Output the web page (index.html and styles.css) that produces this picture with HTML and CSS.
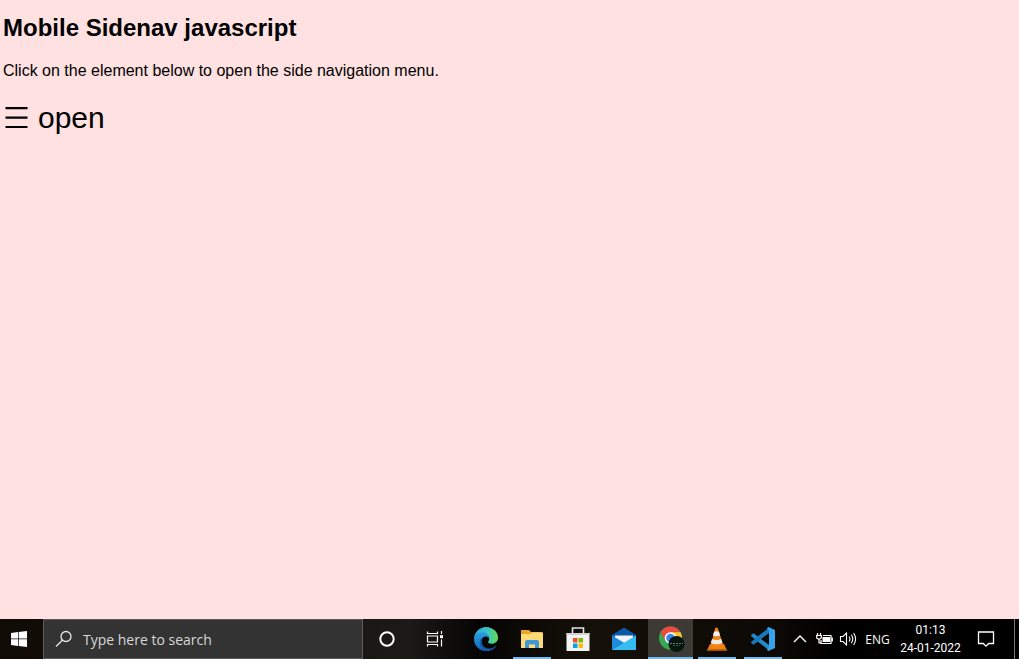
FILE: index.html
```html
<!DOCTYPE html>
<html lang="en">
<head>
<meta charset="utf-8">
<title>Mobile Sidenav javascript</title>
<link rel="stylesheet" href="styles.css">
</head>
<body>
<main class="page">
  <h2 class="title">Mobile Sidenav javascript</h2>
  <p class="hint">Click on the element below to open the side navigation menu.</p>
  <button class="open-nav" type="button">
    <svg width="27" height="24" viewBox="0 0 27 24" aria-hidden="true"><path d="M2.500 2.200h22M2.500 11.700h22M2.500 21h22" stroke="#000" stroke-width="2.200"/></svg>
    <span>open</span>
  </button>
</main>
<footer class="taskbar">
  <button class="start" type="button" aria-label="Start">
    <svg width="16" height="16" viewBox="0 0 16 16" fill="#fff"><path d="M0 2l7-1v6.500H0zM7.700.9L16 0v7.500H7.700zM0 8.200h7V15l-7-1zM7.700 8.200H16V16l-8.300-1z"/></svg>
  </button>
  <label class="search">
    <svg width="18" height="18" viewBox="0 0 18 18" fill="none" stroke="#e6e6e6" stroke-width="1.300"><circle cx="11" cy="6.500" r="5"/><path d="M7.300 10.200L1 16.500"/></svg>
    <input class="search-input" type="text" placeholder="Type here to search" aria-label="Type here to search">
  </label>
  <nav class="tools">
    <button class="tool" type="button" aria-label="Cortana">
      <svg width="18" height="18" viewBox="0 0 18 18" fill="none" stroke="#fff" stroke-width="2"><circle cx="9" cy="9" r="6.700"/></svg>
    </button>
    <button class="tool" type="button" aria-label="Task View">
      <svg width="18" height="18" viewBox="0 0 18 18" fill="none" stroke="#fff" stroke-width="1.200"><path d="M1.500 1.500v2h10v-2M1.500 16.500v-2h10v2M1.500 6h10v6h-10zM15.500 1v3M15.500 9.500v7"/><path d="M14 5.200h3v3h-3z" fill="#fff" stroke="none"/></svg>
    </button>
  </nav>
  <nav class="apps">
    <button class="app" type="button" aria-label="Edge">
      <svg width="24" height="24" viewBox="0 0 24 24">
        <defs>
          <linearGradient id="edge-top"><stop offset="0" stop-color="#2aa6e0"/><stop offset=".55" stop-color="#35c3c8"/><stop offset="1" stop-color="#65dc4b"/></linearGradient>
          <linearGradient id="edge-left" x2="0" y2="1"><stop offset="0" stop-color="#299fe0"/><stop offset="1" stop-color="#1266b8"/></linearGradient>
        </defs>
        <path d="M0 12C.3 5 5.500 0 12 0c7 0 12 5.200 12 10.500 0 4-3 6.300-6.500 6.300-3 0-3.700-1.200-3.300-2.200.6-1 1-1.700 1-2.900C15 8.500 11.500 6.500 8 6.500 4 6.500 1 9 0 12z" fill="url(#edge-top)"/>
        <path d="M0 12c.6-4.200 4-6.800 7.800-6.800 4.300 0 7.600 2.700 7.600 6.200-.6-1.200-2-2-3.400-2-3 0-4.500 2.300-4.500 5 0 5 4 9 9.300 7.700C15 23.200 13.500 24 12 24 5.400 24 0 18.700 0 12z" fill="url(#edge-left)"/>
        <path d="M9.300 10.200C6.500 13 7 18 11 20.500c3.500 2 7.500 1 10.200-1.300.6-.5 1.300 0 .8.600-2.200 2.900-6 4.600-9.500 4.200C8 22.700 5.500 19.200 5.800 15c.2-2.400 1.700-4.200 3.500-4.800z" fill="#1259ad"/>
      </svg>
    </button>
    <button class="app running" type="button" aria-label="File Explorer">
      <svg width="22" height="20" viewBox="0 0 22 20"><path d="M0 1h8l2 2h11v4H0z" fill="#e9a62b"/><path d="M0 5h9l2-1.500h11V19H0z" fill="#ffdb76"/><path d="M4 19v-6q0-2 2-2h10q2 0 2 2v6h-4v-3.500H8V19z" fill="#3f97d8"/></svg>
    </button>
    <button class="app" type="button" aria-label="Microsoft Store">
      <svg width="24" height="26" viewBox="0 0 24 26"><path d="M6.500 9V2h11v7" fill="none" stroke="#e5e5e5" stroke-width="1.600"/><path d="M.5 7h23v18H.5z" fill="#f3f3f3"/><path d="M.5 7h23v2H.5z" fill="#d2d2d2"/><path d="M7 12h4.500v4.500H7z" fill="#f25022"/><path d="M12.500 12H17v4.500h-4.500z" fill="#7fba00"/><path d="M7 17.500h4.500V22H7z" fill="#00a4ef"/><path d="M12.500 17.500H17V22h-4.500z" fill="#ffb900"/></svg>
    </button>
    <button class="app" type="button" aria-label="Mail">
      <svg width="24" height="24" viewBox="0 0 24 24"><path d="M0 8l12-7.500L24 8v4H0z" fill="#0b57a9"/><path d="M3 8.500h18V14l-9 4-9-4z" fill="#f2f4f7"/><path d="M0 8.500L24 23H0z" fill="#1e91dd"/><path d="M24 8.500V23H0z" fill="#35bdf3"/><path d="M0 8.500l10.500 8L0 23z" fill="#2089d8"/></svg>
    </button>
    <button class="app running active" type="button" aria-label="Chrome">
      <svg width="28" height="28" viewBox="0 0 28 28"><circle cx="13.500" cy="13" r="11.500" fill="#34a853"/><path d="M3.500 7.200A11.500 11.500 0 0 1 23.500 7.200H13.500L8.500 16z" fill="#e94b3d"/><path d="M13.500 7.200h10A11.500 11.500 0 0 1 25 13l-6 9-4 2 4-8.500z" fill="#fbc52d"/><circle cx="13.500" cy="13" r="5.800" fill="#fff"/><circle cx="13.500" cy="13" r="4.300" fill="#3f83ed"/><circle cx="19.500" cy="19" r="8" fill="#07150f"/><path d="M13 18.500h13" stroke="#6b7770" stroke-dasharray="2 1"/><path d="M16 20.500h7" stroke="#28732c" stroke-dasharray="2 1"/></svg>
    </button>
    <button class="app running" type="button" aria-label="VLC">
      <svg width="22" height="24" viewBox="0 0 22 24"><path d="M4 17h14l3 6.500H1z" fill="#ee8110"/><path d="M9.300 1q1.200-1 2.400 0L17.500 19q-6.500 3-13 0z" fill="#f58416"/><path d="M8.100 4.500h4.800l1.200 4q-3.600 1.500-7.200 0z" fill="#f2f2f2"/><path d="M6 12q4.800 2 9.200 0l1.300 4q-6 2.500-11.800 0z" fill="#eaeaea"/><path d="M1 22h20v1.500H1z" fill="#c65f04"/></svg>
    </button>
    <button class="app running" type="button" aria-label="Visual Studio Code">
      <svg width="24" height="24" viewBox="0 0 24 24"><path d="M0 8.200l2.500-2L18 18v5.500L0 8.900z" fill="#2489ca"/><path d="M0 15.800l2.500 2L18 6V.5L0 15z" fill="#1878bd"/><path d="M17.500 0L24 3v18l-6.500 3-1.500-1 2-3V4l-2-3z" fill="#35a4ec"/></svg>
    </button>
  </nav>
  <div class="tray">
    <button class="tray-icon" type="button" aria-label="Show hidden icons"><svg width="16" height="16" viewBox="0 0 16 16" fill="none" stroke="#fff" stroke-width="1.400"><path d="M2 11l6-6 6 6"/></svg></button>
    <button class="tray-icon" type="button" aria-label="Battery"><svg width="17" height="16" viewBox="0 0 17 16"><path d="M1.500 2v3M4.500 2v3M0 4.500h6M.7 5v2l2.300 1.500L5.300 7V5M3 8v4h3" fill="none" stroke="#fff" stroke-width="1.200"/><path d="M7 4.500h8v8H5V9M16.300 6.500v4" fill="none" stroke="#fff" stroke-width="1.200"/><path d="M6.500 6h7.500v5H6.500z" fill="#fff"/></svg></button>
    <button class="tray-icon" type="button" aria-label="Volume"><svg width="18" height="16" viewBox="0 0 18 16" fill="none" stroke="#fff" stroke-width="1.100"><path d="M1.500 5.500H4l3.500-3.500v12L4 10.500H1.500zM10 5.500q2 2.500 0 5M12.300 3.800q3 4.200 0 8.400M14.600 2q4 6 0 12"/></svg></button>
    <button class="language" type="button">ENG</button>
    <time class="clock" datetime="2022-01-24T01:13"><span>01:13</span><span>24-01-2022</span></time>
    <button class="notices" type="button" aria-label="Notifications"><svg width="18" height="18" viewBox="0 0 18 18" fill="none" stroke="#fff" stroke-width="1.300"><path d="M1.500 2h15v11.500h-4.800L9 16.200l-2.700-2.700H1.500z"/></svg></button>
    <button class="show-desktop" type="button" aria-label="Show desktop"></button>
  </div>
</footer>
</body>
</html>
```
FILE: styles.css
```css
* { box-sizing: border-box; }

body {
  display: flex;
  flex-direction: column;
  min-height: 100vh;
  margin: 0;
  background: #ffe1e1;
  color: #000;
  font-family: "Liberation Sans", Arial, sans-serif;
}

button {
  padding: 0;
  border: 0;
  background: none;
  color: inherit;
  font: inherit;
}

svg { display: block; flex: none; }

.page {
  flex: 1;
  padding: 14px 3px;
}

.title {
  margin: 0 0 20px;
  font-size: 24px;
  line-height: 28px;
}

.hint {
  margin: 0 0 20px;
  font-size: 16px;
  line-height: 18px;
}

.open-nav {
  display: flex;
  align-items: center;
  gap: 8px;
  font-size: 30px;
  line-height: 36px;
}

.taskbar {
  display: flex;
  height: 40px;
  background: linear-gradient(90deg, #100b04, #1b1a17 40%, #060504 47%, #151008 58%, #0c0905 76%, #000 82%);
  color: #fff;
  font-family: "Open Sans", "Noto Sans", sans-serif;
}

.start,
.tool,
.app,
.tray-icon,
.notices {
  display: flex;
  align-items: center;
  justify-content: center;
}

.start { width: 43px; padding-right: 5px; }

.search {
  display: flex;
  flex: 1;
  align-items: center;
  gap: 10px;
  min-width: 60px;
  padding: 0 11px;
  border: 1px solid #5b5b5b;
  background: #333;
}

.search-input {
  flex: 1;
  min-width: 0;
  padding: 2px 0 0;
  border: 0;
  outline: 0;
  background: none;
  color: #fff;
  font: 14px/20px "Open Sans", "Noto Sans", sans-serif;
}

.search-input::placeholder { color: #d8d8d8; opacity: 1; }

.tools, .apps, .tray { display: flex; }

.tool { width: 48px; }

.apps { padding-left: 4px; }

.app {
  width: 38px;
  margin: 0 4px;
  border-bottom: 2px solid transparent;
  padding-top: 2px;
}

.running { border-bottom-color: #76b9ed; }

.active {
  width: 45px;
  margin: 0 1px;
  background: #3d3a36;
}

.tray {
  align-items: center;
  padding-left: 2px;
}

.tray-icon { width: 24px; height: 40px; }

.language {
  width: 35px;
  font-size: 12px;
}

.clock {
  display: flex;
  flex-direction: column;
  align-items: center;
  width: 71px;
  font-family: Roboto, "Open Sans", sans-serif;
  font-size: 12px;
  line-height: 18px;
}

.notices { width: 40px; height: 40px; }

.show-desktop {
  width: 5px;
  height: 40px;
  margin-left: 8px;
  border-left: 1px solid #777;
}
```
